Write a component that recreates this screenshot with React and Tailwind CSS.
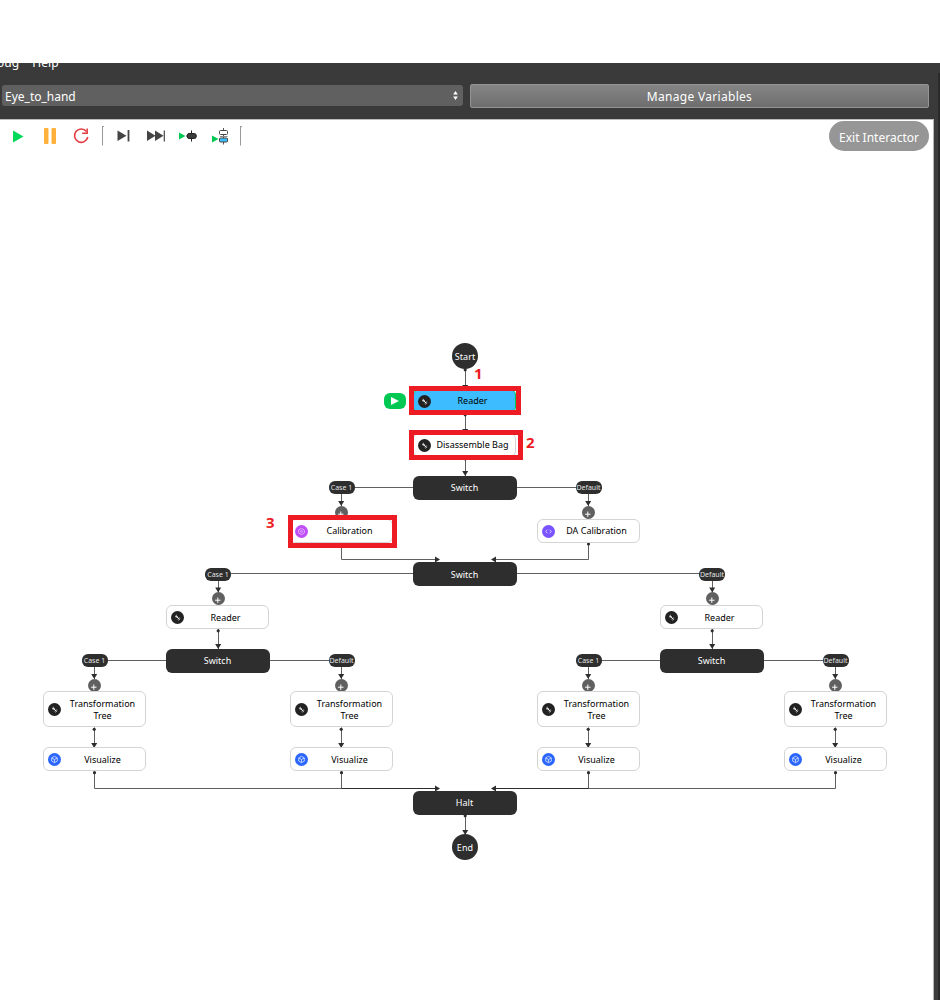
import React from "react";

const INK = "#2e2e2e";

const switches = [
  { x: 413, y: 476, label: "Switch" },
  { x: 413, y: 562, label: "Switch", low: true },
  { x: 166, y: 649, label: "Switch" },
  { x: 660, y: 649, label: "Switch" },
  { x: 413, y: 791, label: "Halt" },
];

const steps = [
  { x: 413, y: 389, h: 24, label: "Reader", kind: "link", active: true },
  { x: 413, y: 433, h: 24, label: "Disassemble Bag", kind: "link" },
  { x: 290, y: 519, h: 24, label: "Calibration", kind: "target" },
  { x: 537, y: 519, h: 24, label: "DA Calibration", kind: "code" },
  { x: 166, y: 605, h: 24, label: "Reader", kind: "link", low: true },
  { x: 660, y: 605, h: 24, label: "Reader", kind: "link", low: true },
  ...[43, 290, 537, 784].flatMap((x) => [
    { x, y: 691, h: 36, label: "Transformation Tree", kind: "link", low: true },
    { x, y: 747, h: 24, label: "Visualize", kind: "cube", low: true },
  ]),
];

const branches = [
  { x: 341.5, y: 487, label: "Case 1" },
  { x: 588.5, y: 487, label: "Default" },
  { x: 218, y: 573.5, label: "Case 1" },
  { x: 712, y: 573.5, label: "Default" },
  { x: 94.5, y: 660, label: "Case 1" },
  { x: 341.5, y: 660, label: "Default" },
  { x: 588.5, y: 660, label: "Case 1" },
  { x: 835.5, y: 660, label: "Default" },
];

const badgeColor = {
  link: "bg-[#222222]",
  target: "bg-[#c04df5]",
  code: "bg-[#7a52ff]",
  cube: "bg-[#2b66ff]",
};

function Badge({ kind }) {
  return (
    <span className={`flex size-[13px] shrink-0 items-center justify-center rounded-full ${badgeColor[kind]}`}>
      <svg viewBox="0 0 13 13" className="size-[13px]" fill="none" stroke="#fff" strokeWidth="1">
        {kind === "link" && (
          <g stroke="#f0f0f0">
            <path d="M5 5.200L8.200 8" strokeWidth="1" />
            <path d="M4 5.700L5.800 4M5 6.700L6.700 5M6.600 8.300L8.300 6.600M7.400 9.200L9.200 7.500" strokeWidth="0.900" />
          </g>
        )}
        {kind === "target" && (
          <g stroke="#eac2ff" strokeWidth="0.8">
            <path d="M6.5 3.4l2.8 1.6v3l-2.8 1.6-2.800-1.600v-3z" />
            <circle cx="6.5" cy="6.5" r="0.9" />
          </g>
        )}
        {kind === "code" && <path d="M5.4 4.7L3.7 6.5l1.7 1.8M7.6 4.7l1.7 1.8-1.7 1.8" stroke="#e4dcff" strokeWidth="0.9" />}
        {kind === "cube" && (
          <path d="M6.5 3.3l2.8 1.6v3.2L6.5 9.7 3.7 8.1V4.9zM3.8 5l2.7 1.5L9.2 5M6.5 6.5v3" stroke="#dbe6ff" strokeWidth="0.8" />
        )}
      </svg>
    </span>
  );
}

function Step({ x, y, h, label, kind, active, low }) {
  return (
    <div
      className={`absolute flex w-[103px] items-center rounded-[6px] border-[1.5px] pl-[4px] ${
        active ? "border-[#00c853] bg-[#3dbcff]" : "border-[#d4d4d4] bg-white"
      }`}
      style={{ left: x, top: y, height: h }}
    >
      <Badge kind={kind} />
      <span
        className={`flex-1 text-center text-[9px] leading-[12px] text-black ${low ? "pt-px" : ""} ${
          label === "Disassemble Bag" ? "whitespace-nowrap pr-px" : "pr-[4px] pl-[3px]"
        }`}
      >
        {label}
      </span>
    </div>
  );
}

function Arrow({ x, y, dir = "down" }) {
  const d = { down: "M-3-4h6L0 1z", right: "M-4-3L1 0l-5 3z", left: "M4-3L-1 0l5 3z" }[dir];
  return <path d={d} fill={INK} transform={`translate(${x} ${y})`} />;
}

function Edges() {
  const down = [
    [465, 368, 390], [465, 413, 434], [465, 457, 476],
    [218, 629, 649], [712, 629, 649], [465, 814, 835],
    ...[94.5, 341.5, 588.5, 835.5].map((x) => [x, 727.5, 748]),
  ];
  return (
    <svg className="absolute inset-0 size-full" fill="none" stroke="none">
      <path
        d="M354 487.5H413M517 487.5H576M231 573.5H413M517 573.5H700M107 660.5H166M270 660.5H329M601 660.5H660M764 660.5H823
           M341.5 544V559.5H437M588.5 544V559.5H493M94.5 772V788.5H437M341.5 772V788.5M588.5 772V788.5M835.5 772V788.5H493"
        stroke="#606060"
      />
      <path d="M341.5 788.5H437M493 788.5H588.5" stroke={INK} />
      {down.map(([x, a, b]) => (
        <g key={`${x}-${a}`}>
          <path d={`M${Math.floor(x) + 0.5} ${a}V${b}`} stroke="#606060" />
          <circle cx={Math.floor(x) + 0.2} cy={a + 1.8} r="1.6" fill={INK} />
          <Arrow x={Math.floor(x) + 0.2} y={b - 1} />
        </g>
      ))}
      {branches.map((b) => (
        <g key={`${b.x}-${b.y}`}>
          <path d={`M${Math.floor(b.x) + 0.5} ${b.y + 6}v13`} stroke="#606060" />
          <Arrow x={Math.floor(b.x) + 0.2} y={b.y + 18} />
        </g>
      ))}
      {[94.5, 341.5, 588.5, 835.5].map((x) => <circle key={x} cx={x} cy="772.7" r="1.6" fill={INK} />)}
      <circle cx="588.5" cy="544" r="1.6" fill={INK} />
      {[559.5, 788.5].map((y) => (
        <g key={y}>
          <Arrow x={439} y={y} dir="right" />
          <Arrow x={492} y={y} dir="left" />
        </g>
      ))}
    </svg>
  );
}

function Flowchart() {
  return (
    <div className="absolute inset-0">
      <Edges />
      {[["Start", 343], ["End", 834]].map(([t, y]) => (
        <div key={t} className="absolute left-[452px] flex size-[26px] items-center justify-center rounded-full bg-[#2e2e2e] pt-[2px] text-[9px] tracking-[0.1px] text-white" style={{ top: y }}>
          {t}
        </div>
      ))}
      {switches.map((s) => (
        <div key={`${s.x}-${s.y}`} className={`absolute flex h-[24px] w-[104px] items-center justify-center rounded-[6px] bg-[#2e2e2e] pr-px text-[9px] text-white ${s.low ? "pt-px" : ""}`} style={{ left: s.x, top: s.y }}>
          {s.label}
        </div>
      ))}
      {branches.map((b) => (
        <React.Fragment key={`${b.x}-${b.y}`}>
          <div className="absolute flex h-[13px] w-[26px] items-center justify-center rounded-[6px] bg-[#2e2e2e] pt-[1.5px] text-[7px] whitespace-nowrap text-[#e4e4e4]" style={{ left: b.x - 13, top: b.y - 6 }}>
            {b.label}
          </div>
          <svg className="absolute size-[13px]" viewBox="0 0 13 13" style={{ left: b.x - 6.5, top: b.y + 18.5 }}>
            <circle cx="6.5" cy="6.5" r="6.5" fill="#606060" />
            <path d="M5.8 5.500v5.400M3.100 8.200h5.400" stroke="#fff" />
          </svg>
        </React.Fragment>
      ))}
      {steps.map((s) => <Step key={`${s.x}-${s.y}`} {...s} />)}
      <div className="absolute top-[393px] left-[384px] flex h-[16px] w-[22px] items-center justify-center rounded-[6px] bg-[#00c853]">
        <svg viewBox="0 0 8 8" className="size-[8px]"><path d="M0 0l8 4-8 4z" fill="#fff" /></svg>
      </div>
      <div className="absolute top-[386px] left-[409px] h-[29px] w-[112px] border-5 border-[#ed1c24]" />
      <div className="absolute top-[430px] left-[409px] h-[30px] w-[114px] border-5 border-[#ed1c24]" />
      <div className="absolute top-[515px] left-[288px] h-[33px] w-[109px] border-5 border-[#ed1c24]" />
      <span className="absolute top-[363px] left-[474px] text-[15px] leading-[20px] font-bold text-[#ed1c24]">1</span>
      <span className="absolute top-[432px] left-[526px] text-[15px] leading-[20px] font-bold text-[#ed1c24]">2</span>
      <span className="absolute top-[512px] left-[266px] text-[15px] leading-[20px] font-bold text-[#ed1c24]">3</span>
    </div>
  );
}

function Header() {
  return (
    <header className="h-[57px] overflow-hidden border-b border-[#bdbdbd] bg-[#3a3a3a] text-[12px] text-white">
      <nav className="-ml-[19px] flex h-[22px] items-start gap-[13px] leading-[16px] tracking-[0.1px]">
        <span className="-mt-[8px]">Debug</span>
        <span className="-mt-[8px]">Help</span>
      </nav>
      <div className="flex items-start gap-[7px] pr-[11px] pl-[2px]">
        <div className="flex h-[21px] w-[461px] items-center justify-between rounded-[3px] bg-[#606060] pr-[5px] pl-[3px]">
          <span className="pt-[2px]">Eye_to_hand</span>
          <svg width="5" height="9" viewBox="0 0 5 9"><path d="M2.5 0L4.800 3.500h-4.600zM2.500 9L4.800 5.500h-4.600z" fill="#fff" /></svg>
        </div>
        <button className="-mt-px flex h-[24px] flex-1 items-center justify-center rounded-[2px] border border-[#949494] bg-linear-to-b from-[#858585] to-[#6e6e6e] pt-[2px] tracking-[0.3px]">
          Manage Variables
        </button>
      </div>
    </header>
  );
}

function Toolbar() {
  return (
    <div className="relative z-10 flex items-start justify-between pr-[4px]">
      <svg width="260" height="32" viewBox="0 120 260 32" fill="none">
        <path d="M13 130.500v12l10.500-6z" fill="#00d85a" />
        <rect x="44" y="128" width="4.500" height="16" rx="1" fill="#ffb13b" />
        <rect x="51.500" y="128" width="4.500" height="16" rx="1" fill="#ffb13b" />
        <path d="M86.500 131.500A6.700 6.700 0 1 0 87.800 137" stroke="#e23b42" strokeWidth="1.600" />
        <path d="M87.200 128.500v4.700h-5" stroke="#e23b42" strokeWidth="1.500" />
        <path d="M102.500 145.500V126.500M102 126.500H104M240.500 145.500V126.500M240 126.500H242" stroke="#999" />
        <path d="M117.500 130.500v10.500l9-5.250z" fill="#444" />
        <path d="M128.500 130v11.500" stroke="#444" strokeWidth="1.800" />
        <path d="M147 130.500v10.500l8.500-5.250zM155 130.500v10.500l8.500-5.250z" fill="#444" />
        <path d="M164.300 130.500v11" stroke="#444" strokeWidth="1.200" />
        <path d="M179 132.500v7l6.500-3.500z" fill="#00c853" />
        <path d="M186 136h11M191.500 130.500v11" stroke="#222" />
        <rect x="187.500" y="133.500" width="8.500" height="5" rx="1.500" fill="#3c3c3c" stroke="#222" />
        <path d="M223.500 128v16.500" stroke="#555" />
        <rect x="219.500" y="130.500" width="8" height="4" rx="1" fill="#fff" stroke="#444" />
        <path d="M220 136.500h7.500" stroke="#888" />
        <rect x="219.500" y="138" width="8" height="4" rx="1" fill="#3dbcff" stroke="#444" />
        <path d="M212 135.500v7l6.500-3.500z" fill="#00c853" />
      </svg>
      <button className="mt-px flex h-[30px] w-[100px] items-center justify-center rounded-full bg-[#969696] pt-[3px] text-[12px] text-white">
        Exit Interactor
      </button>
    </div>
  );
}

export default function App() {
  return (
    <div className="relative flex h-[1000px] w-[940px] flex-col overflow-hidden bg-white pt-[63px] font-['Noto_Sans','Open_Sans',sans-serif]">
      <Header />
      <div className="flex flex-1">
        <main className="w-[934px] border-r border-[#b5b5b5]">
          <Toolbar />
        </main>
        <aside className="-mt-px w-[4px] bg-[#3c3c3c]" />
        <aside className="-mt-[47px] w-[2px] bg-[#2a2a2a]" />
      </div>
      <Flowchart />
    </div>
  );
}
